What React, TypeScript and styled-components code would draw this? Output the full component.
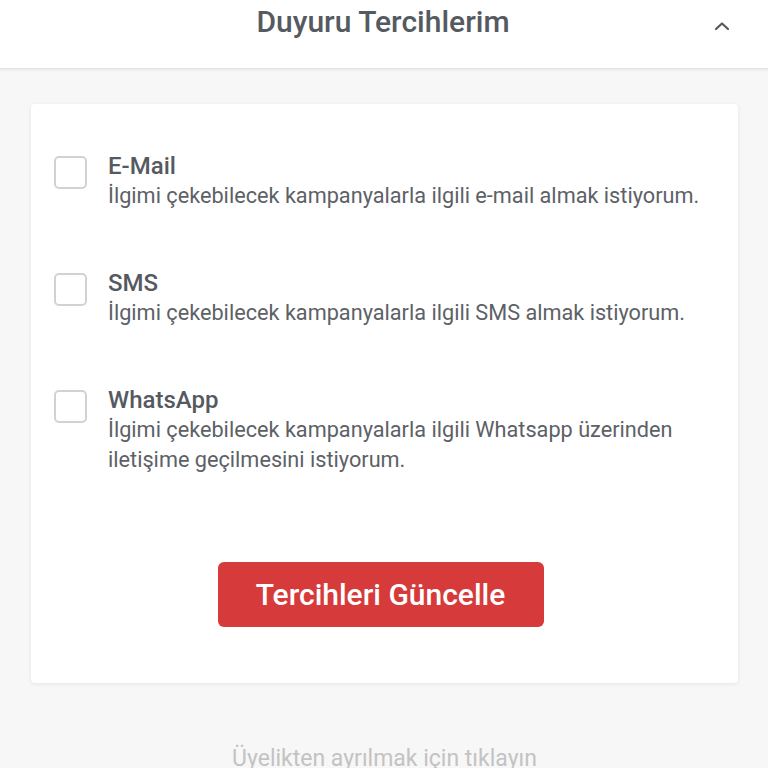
import React, { useState } from "react";
import styled, { createGlobalStyle } from "styled-components";

const Global = createGlobalStyle`
  html, body { margin: 0; padding: 0; background: #f7f7f7; }
  body { font-family: Roboto, "Noto Sans", Arial, sans-serif; }
  * { box-sizing: border-box; }
`;

const Page = styled.div`
  width: 768px;
  min-height: 768px;
  background: #f7f7f7;
  display: flex;
  flex-direction: column;
`;

const Header = styled.header`
  height: 69px;
  background: #ffffff;
  border-bottom: 1px solid #e3e3e3;
  box-shadow: 0 1px 3px rgba(0, 0, 0, 0.08);
  display: grid;
  grid-template-columns: 1fr auto 1fr;
  align-items: start;
  padding: 4px 34px 0 32px;
`;

const Title = styled.h1`
  grid-column: 2;
  margin: 0;
  font-size: 30px;
  line-height: 36px;
  font-weight: 500;
  color: #555a60;
`;

const Toggle = styled.button`
  grid-column: 3;
  justify-self: end;
  margin-top: 10px;
  background: none;
  border: none;
  padding: 0;
  width: 24px;
  height: 24px;
  display: flex;
  align-items: center;
  justify-content: center;
  cursor: pointer;
`;

const Body = styled.main`
  padding: 35px 30px 0 31px;
  display: flex;
  flex-direction: column;
`;

const Card = styled.section`
  background: #ffffff;
  border-radius: 4px;
  box-shadow: 0 1px 4px rgba(0, 0, 0, 0.08);
  padding: 47px 31px 56px 23px;
  display: flex;
  flex-direction: column;
`;

const Options = styled.div`
  display: flex;
  flex-direction: column;
  gap: 57px;
`;

const Option = styled.label`
  display: flex;
  align-items: flex-start;
  gap: 21px;
  cursor: pointer;
`;

const Box = styled.span<{ $checked: boolean }>`
  flex: none;
  width: 33px;
  height: 33px;
  margin-top: 5px;
  border: 2px solid #d2d2d2;
  border-radius: 5px;
  background: ${(p) => (p.$checked ? "#d63a3a" : "#fff")};
`;

const Texts = styled.div`
  display: flex;
  flex-direction: column;
`;

const OptionTitle = styled.span`
  font-size: 24px;
  line-height: 30px;
  font-weight: 500;
  color: #555a60;
`;

const OptionDesc = styled.span`
  font-size: 21.7px;
  line-height: 30px;
  color: #5d6166;
`;

const Submit = styled.button`
  align-self: center;
  margin-top: 87px;
  width: 326px;
  height: 65px;
  border: none;
  border-radius: 6px;
  background: #d63a3a;
  color: #ffffff;
  font-family: Roboto, Arial, sans-serif;
  font-size: 30px;
  font-weight: 500;
  cursor: pointer;
`;

const Footer = styled.a`
  align-self: center;
  margin-top: 62px;
  font-size: 23px;
  line-height: 27px;
  color: #c3c3c3;
  text-decoration: none;
`;

const items = [
  { key: "email", title: "E-Mail", desc: "İlgimi çekebilecek kampanyalarla ilgili e-mail almak istiyorum." },
  { key: "sms", title: "SMS", desc: "İlgimi çekebilecek kampanyalarla ilgili SMS almak istiyorum." },
  {
    key: "wa",
    title: "WhatsApp",
    desc: "İlgimi çekebilecek kampanyalarla ilgili Whatsapp üzerinden iletişime geçilmesini istiyorum.",
  },
];

export default function App() {
  const [checked, setChecked] = useState<Record<string, boolean>>({});
  return (
    <Page>
      <Global />
      <Header>
        <Title>Duyuru Tercihlerim</Title>
        <Toggle aria-label="collapse">
          <svg width="16" height="10" viewBox="0 0 16 10" fill="none">
            <path d="M2 8 L8 2.5 L14 8" stroke="#555a60" strokeWidth="2.2" strokeLinecap="round" strokeLinejoin="round" />
          </svg>
        </Toggle>
      </Header>
      <Body>
        <Card>
          <Options>
            {items.map((it) => (
              <Option key={it.key} onClick={() => setChecked((c) => ({ ...c, [it.key]: !c[it.key] }))}>
                <Box $checked={!!checked[it.key]} />
                <Texts>
                  <OptionTitle>{it.title}</OptionTitle>
                  <OptionDesc>{it.desc}</OptionDesc>
                </Texts>
              </Option>
            ))}
          </Options>
          <Submit>Tercihleri Güncelle</Submit>
        </Card>
        <Footer href="#">Üyelikten ayrılmak için tıklayın</Footer>
      </Body>
    </Page>
  );
}
